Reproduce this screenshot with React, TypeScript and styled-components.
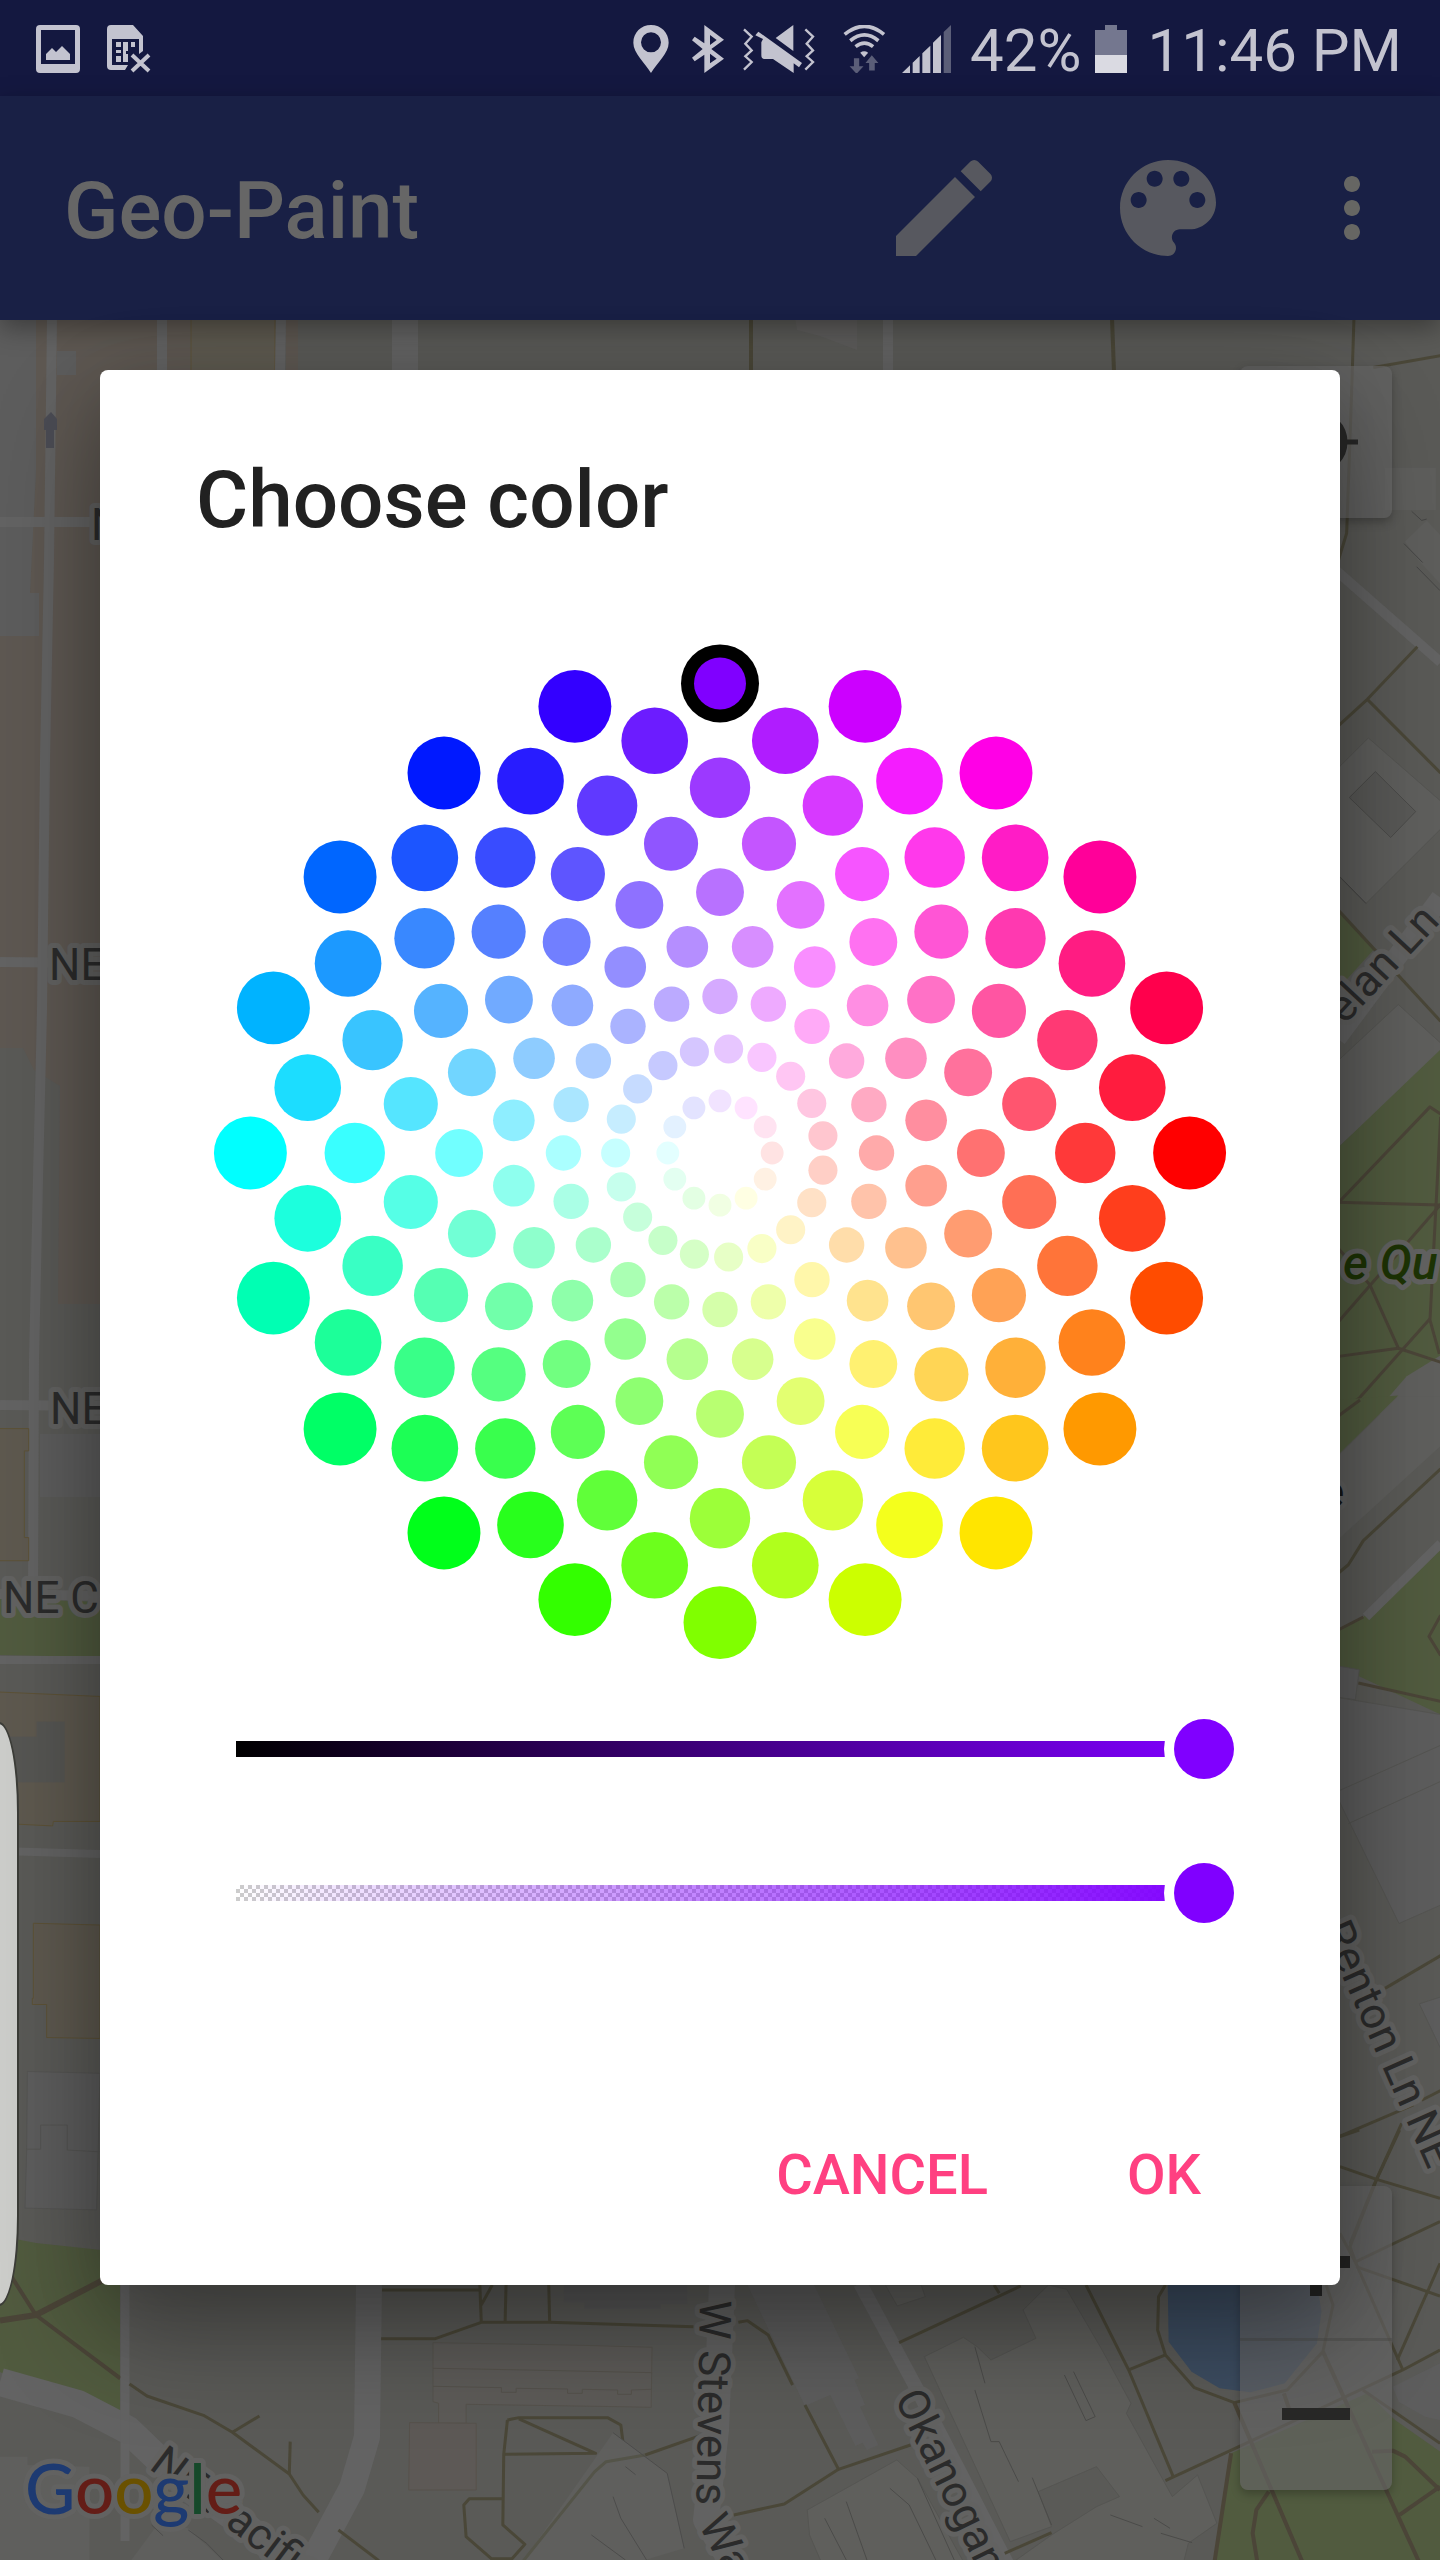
import React, { useState } from "react";
import styled, { createGlobalStyle, css } from "styled-components";
import { MdEdit, MdMoreVert } from "react-icons/md";

const GlobalStyle = createGlobalStyle`
  * { box-sizing: border-box; }
  body { margin: 0; background: #595956; }
`;

/* ---------- page frame ---------- */

const Screen = styled.div`
  display: flex;
  flex-direction: column;
  min-height: 100vh;
  font-family: Roboto, "Liberation Sans", sans-serif;
`;

const StatusBar = styled.header`
  display: flex;
  align-items: center;
  justify-content: space-between;
  height: 96px;
  padding: 2px 38px 0 36px;
  background: #141840;
  color: #c3c3cf;
  font-size: 60px;
  line-height: 72px;
`;

const StatusGroup = styled.div`
  display: flex;
  align-items: center;
`;

const StatusText = styled.span<{ $before: number }>`
  margin-left: ${(p) => p.$before}px;
  padding-top: 4px;
  white-space: nowrap;
`;

const Glyph = styled.svg<{ $w: number; $before?: number }>`
  display: block;
  width: ${(p) => p.$w}px;
  height: 48px;
  margin-left: ${(p) => p.$before ?? 0}px;
  fill: currentColor;
`;

const Toolbar = styled.div`
  position: relative;
  z-index: 1;
  display: flex;
  align-items: center;
  height: 224px;
  padding: 0 40px 0 64px;
  background: #192045;
  box-shadow: 0 8px 24px rgba(0, 0, 0, 0.35);
`;

const AppTitle = styled.h1`
  flex: 1;
  margin: 0;
  padding-top: 6px;
  color: #666666;
  font-size: 80px;
  font-weight: 500;
  line-height: 96px;
`;

const Actions = styled.div`
  display: flex;
  align-items: center;
  gap: 72px;
`;

const ToolGroup = styled.div`
  display: flex;
  gap: 96px;
`;

const IconButton = styled.button<{ $size: number; $tone: string }>`
  display: flex;
  padding: 0;
  border: 0;
  background: none;
  color: ${(p) => p.$tone};
  font-size: ${(p) => p.$size}px;
  cursor: pointer;
`;

/* ---------- map ---------- */

const MapPane = styled.main`
  position: relative;
  flex: 1;
  min-height: 2240px;
  overflow: hidden;
`;

const MapCanvas = styled.svg`
  position: absolute;
  inset: 0;
  width: 100%;
  height: 100%;
`;

const Line = styled.polyline<{ $c?: string; $w?: number }>`
  fill: none;
  stroke: ${(p) => p.$c ?? "#4a4738"};
  stroke-width: ${(p) => p.$w ?? 4}px;
  stroke-linejoin: round;
  vector-effect: non-scaling-stroke;
`;

const Label = styled.text<{ $size?: number; $color?: string; $style?: string; $weight?: number }>`
  fill: ${(p) => p.$color ?? "#2b2b2b"};
  stroke: #626261;
  stroke-width: 10px;
  stroke-linejoin: round;
  paint-order: stroke;
  font-family: Roboto, sans-serif;
  font-size: ${(p) => p.$size ?? 44}px;
  font-style: ${(p) => p.$style ?? "normal"};
  font-weight: ${(p) => p.$weight ?? 400};
`;

const Logo = styled(Label)`
  font-family: Lato, sans-serif;
`;

const controlSurface = css`
  border-radius: 8px;
  background: rgba(102, 102, 101, 0.65);
  box-shadow: 0 4px 10px rgba(0, 0, 0, 0.25);
`;

const LocateButton = styled.button`
  ${controlSurface}
  position: absolute;
  top: 46px;
  right: 48px;
  display: flex;
  align-items: center;
  justify-content: center;
  width: 152px;
  height: 152px;
  padding: 0;
  border: 0;
`;

const ZoomControl = styled.div`
  ${controlSurface}
  position: absolute;
  right: 48px;
  bottom: 70px;
  display: flex;
  flex-direction: column;
  width: 152px;
`;

const ZoomButton = styled.button`
  display: flex;
  align-items: center;
  justify-content: center;
  height: 152px;
  padding: 0;
  border: 0;
  background: none;
  & + & {
    box-shadow: inset 0 3px 0 rgba(70, 70, 68, 0.4);
  }
`;

const EdgeHandle = styled.div`
  position: absolute;
  left: -6px;
  top: 1402px;
  width: 25px;
  height: 584px;
  border: 2px solid #3c3d38;
  border-radius: 0 20px 20px 0 / 0 90px 90px 0;
  background: #cdcecb;
`;

/* ---------- dialog ---------- */

const Overlay = styled.div`
  position: absolute;
  inset: 96px 0 0;
  z-index: 2;
  display: flex;
  align-items: center;
  justify-content: center;
  padding: 0 100px 2px;
`;

const Dialog = styled.section`
  display: flex;
  flex-direction: column;
  width: 100%;
  max-width: 1240px;
  padding: 80px 96px 38px;
  border-radius: 8px;
  background: #ffffff;
  box-shadow: 0 50px 110px rgba(0, 0, 0, 0.32), 0 10px 70px rgba(0, 0, 0, 0.16);
`;

const DialogTitle = styled.h2`
  margin: 0 0 79px;
  color: #212121;
  font-size: 80px;
  font-weight: 500;
  line-height: 100px;
`;

const Wheel = styled.svg`
  display: block;
  width: 100%;
`;

const Swatch = styled.circle`
  cursor: pointer;
`;

const SliderRow = styled.label`
  display: flex;
  align-items: center;
  height: 144px;
  padding: 0 10px;
`;

const thumb = css<{ $color: string }>`
  width: 60px;
  height: 60px;
  border: 0;
  border-radius: 50%;
  background: ${(p) => p.$color};
  box-shadow: 0 0 0 10px #ffffff;
`;

/* White frame over the track leaves a 16px bar that stops at the centre of the thumb's end positions. */
const cover = "linear-gradient(#ffffff, #ffffff)";
const frame = [
  `${cover} top / 100% 22px no-repeat`,
  `${cover} bottom / 100% 22px no-repeat`,
  `${cover} left / 30px 100% no-repeat`,
  `${cover} right / 30px 100% no-repeat`,
].join(", ");

const Slider = styled.input<{ $track: string; $color: string }>`
  flex: 1;
  min-width: 0;
  height: 60px;
  margin: 0;
  appearance: none;
  background: none;
  cursor: pointer;
  &::-webkit-slider-runnable-track {
    height: 60px;
    background: ${frame}, ${(p) => p.$track};
  }
  &::-webkit-slider-thumb {
    appearance: none;
    ${thumb}
  }
  &::-moz-range-track {
    height: 60px;
    background: ${frame}, ${(p) => p.$track};
  }
  &::-moz-range-thumb {
    ${thumb}
  }
`;

const HiddenText = styled.span`
  position: absolute;
  width: 1px;
  height: 1px;
  overflow: hidden;
  clip-path: inset(50%);
`;

const Footer = styled.footer`
  display: flex;
  justify-content: flex-end;
  gap: 16px;
  margin: 138px -48px 0 0;
`;

const TextButton = styled.button`
  min-width: 256px;
  height: 144px;
  padding: 0 32px;
  border: 0;
  background: none;
  color: #ff4081;
  font-family: inherit;
  font-size: 56px;
  font-weight: 500;
  text-transform: uppercase;
  cursor: pointer;
`;

/* ---------- colour wheel ---------- */

type Dot = { x: number; y: number; r: number; fill: string };

const hsv = (h: number, s: number, v: number) => {
  const f = (n: number) => {
    const k = (n + h / 60) % 6;
    return Math.round(255 * (v - v * s * Math.max(0, Math.min(k, 4 - k, 1))));
  };
  return `rgb(${f(5)}, ${f(3)}, ${f(1)})`;
};

const RINGS = 9;
const SPREAD = 469.6;

const dots: Dot[] = [];
for (let ring = 1; ring <= RINGS; ring++) {
  const count = ring === 1 ? 12 : ring === 2 ? 19 : 20;
  const shift = ring % 2 === 0 ? 180 / count : 0;
  const radius = (SPREAD * ring) / RINGS;
  for (let i = 0; i < count; i++) {
    const angle = (shift + (i * 360) / count) % 360;
    const rad = (angle * Math.PI) / 180;
    dots.push({
      x: radius * Math.cos(rad),
      y: radius * Math.sin(rad),
      r: 8.3 + 3.13 * ring,
      fill: hsv(angle, ring / RINGS, 1),
    });
  }
}
const START = dots.length - 5;

/* ---------- map data ---------- */

const OLIVE = "#4a4738";
const BROWN = "#4b4538";
const ROAD = "#636363";
const GREEN = "#515b3f";
const BLOCK = "#5f5f5d";

const Lines = ({ c, w, list }: { c?: string; w?: number; list: string[] }) => (
  <>
    {list.map((points) => (
      <Line key={points} points={points} $c={c} $w={w} />
    ))}
  </>
);

const Areas = ({ fill, list, edge }: { fill: string; list: string[]; edge?: string }) => (
  <g fill={fill} stroke={edge ?? "none"} strokeWidth={edge ? 1 : 0}>
    {list.map((points) => (
      <polygon key={points} points={points} vectorEffect="non-scaling-stroke" />
    ))}
  </g>
);

const CampusMap = () => (
  <MapCanvas viewBox="0 320 1440 2240" preserveAspectRatio="xMinYMin slice" aria-hidden="true">
    <rect y="320" width="1440" height="2240" fill="#5a5a57" />

    {/* west side, upper blocks */}
    <Areas
      fill="#5e5852"
      list={[
        "36,320 190,320 190,380 100,380 100,1304 58,1304 60,1086 34,1070 23,1048 0,1048 0,636 39,636 39,593 30,593 36,470",
        "286,320 298,320 298,370 286,370",
      ]}
    />
    <Areas fill="#5e5a50" edge="#5e5238" list={["191,318 275,318 275,372 191,372"]} />
    <Areas fill="#5d5d5d" list={["57,351 76,351 76,375 57,375", "40,1434 100,1434 100,1497 40,1497", "0,320 36,320 36,470 30,593 39,593 39,636 0,636"]} />
    <Areas fill="#5e5d5c" list={["795,318 857,318 857,350 820,336 797,330"]} />
    <Areas fill={GREEN} list={["0,1598 100,1602 100,1657 0,1655"]} />
    <Lines
      c={ROAD}
      w={10}
      list={["0,522 100,522", "0,962 100,963", "0,1405 100,1406", "0,1594 100,1596"]}
    />
    <Lines c={ROAD} w={8} list={["0,1660 100,1660", "0,1851 100,1854"]} />
    <Line points="52,318 49,560 45,760 42,1010 38,1180 34,1360 33,1596" $c={ROAD} $w={10} />
    <polygon points="44,430 44,419 51,412 57,419 57,430 54,430 54,448 46,448 46,430" fill="#4b4c54" />
    <Line points="405,318 405,372" $c={ROAD} $w={26} />
    <Lines c={ROAD} w={10} list={["162,318 162,372", "281,318 280,372", "888,318 888,372"]} />
    <Lines list={["751,318 751,372", "1112,318 1114,372"]} />

    {/* west side, lower blocks */}
    <g transform="translate(0 1000) scale(0.3333 0.8929)">
      <Areas
        fill="#5e594f"
        edge="#5d5237"
        list={[
          "-4,480 86,480 86,505 73,505 73,602 86,602 86,628 -4,628",
          "-4,775 300,780 300,920 160,920 158,925 -4,922",
          "100,1034 300,1036 300,1163 140,1162 140,1125 97,1125 97,1118 100,1118",
        ]}
      />
      <Areas fill="#565653" list={["25,825 110,825 110,808 194,808 194,876 25,876"]} />
      <Areas fill="#5d5d5d" edge="#555553" list={["82,1200 300,1202 290,1355 75,1353 80,1288"]} />
      <Lines c="#555553" w={1} list={["80,1287 122,1287 122,1260 202,1260 202,1288 300,1290"]} />
    </g>

    {/* south-west corner */}
    <polygon points="0,2236 36,2243 120,2252 120,2430 0,2372" fill={GREEN} />
    <g transform="translate(0 2270) scale(0.4592 0.3333)">
      <Lines c={BROWN} w={4} list={["25,20 78,135 262,325"]} />
      <Lines c={BROWN} w={6} list={["0,152 78,135 222,32"]} />
      <Areas
        fill={BLOCK}
        list={["-2,560 60,560 60,585 195,590 195,872 -2,872", "285,872 345,760 410,775 485,872"]}
      />
      <Areas fill="#5d5b58" edge="#56534d" list={["943,218 1270,226 1420,232 1418,412 1345,410 1015,403 1015,460 955,460 955,400 943,395"]} />
      <Areas fill="#5d5956" edge="#57524c" list={["892,458 1037,460 1037,660 890,660"]} />
      <Areas fill="#575757" list={["1228,45 1497,45 1497,103 1438,103 1438,117 1273,117 1273,97 1228,97"]} />
      <Lines
        c="#55524c"
        w={1}
        list={["943,295 1030,297 1145,300 1420,308", "943,349 1092,353 1092,367 1124,367 1124,355 1236,357 1236,370 1268,370 1268,358 1345,360 1345,373 1375,373 1375,360 1418,358"]}
      />
    </g>
    <Line points="0,2382 78,2404 128,2430 175,2475 238,2520 300,2572" $c={ROAD} $w={28} />
    <Line points="125,2284 125,2541" $c={ROAD} $w={9} />
    <Line points="369,2284 367,2437 352,2488 306,2574" $c={ROAD} $w={26} />
    <g transform="translate(0 2270) scale(0.4592 0.3333)">
      <Lines
        c={OLIVE}
        w={3}
        list={[
          "832,60 1045,60",
          "1045,45 1048,155",
          "1072,45 1048,105",
          "1102,45 1100,155",
          "1195,45 1197,157",
          "830,206 948,206 1048,157 1197,157 1510,170",
          "282,342 320,378 443,436 506,487 630,612 660,675 694,727",
          "506,487 565,438",
          "632,515 630,612",
          "737,780 825,872",
          "1105,450 1130,443 1323,443 1352,465 1360,555",
          "1130,447 1297,550 1097,553",
          "1105,450 1097,553 1095,765 1143,823 1115,866 1070,866 1015,800 1010,705 1022,686 1095,686",
          "1545,487 1405,555",
        ]}
      />
      <Areas fill={BLOCK} list={["1140,872 1335,488 1453,610 1490,835 1400,872"]} />
      <Lines c="#545449" w={3} list={["1405,555 1320,575 1295,605 1140,872"]} />
      <Lines c="#4c4c4b" w={1} list={["1335,488 1453,610", "1335,680 1352,745 1408,870", "1453,610 1490,835", "1288,795 1362,870", "1362,590 1384,614", "410,780 450,820 487,872", "330,765 355,797"]} />
    </g>

    {/* south-east */}
    <Line points="722,2284 716,2430 706,2520 740,2575" $c="#626262" $w={26} />
    <g transform="translate(720 2130) scale(0.4592 0.3333)">
      <Areas
        fill="#5d5d5d"
        list={[
          "60,465 205,465 303,745 293,750 316,825 305,830 345,945 320,960 310,938 295,948 240,795 185,828",
          "1465,770 1568,700 1568,870 1535,860 1478,815",
        ]}
      />
      <Areas
        fill="#5f5f5c"
        edge="#555552"
        list={[
          "445,680 530,622 560,650 590,690 688,625 660,540 715,465 755,478 830,655 895,820 885,850 985,1100 1040,1035 1082,1180 1020,1240 1010,1295 640,1295 722,1215 820,1130 870,1100 820,1010 693,1085 722,1190 632,1235",
          "190,1140 385,990 430,1045 530,1295 220,1295 195,1215",
          "360,465 438,465 447,500 386,528",
        ]}
      />
      <Areas fill={GREEN} list={["1113,970 1410,790 1470,870 1568,965 1568,1295 1077,1295"]} />
      <Areas fill="#3c4c60" list={["975,460 977,635 1027,725 1088,775 1155,787 1230,760 1300,640 1310,545 1300,460"]} />
      <Lines
        c="#4b4b49"
        w={1}
        list={["770,725 817,860", "750,735 797,872 817,860", "555,650 577,760", "555,780 590,935 608,935 650,1055", "680,1043 722,1185", "228,1165 275,1290", "370,1075 412,1125 470,1290", "430,1045 510,1290", "275,1115 320,1290", "850,1155 920,1190", "945,1165 980,1195", "960,1210 1028,1238"]}
      />
      <Lines c={ROAD} w={14} list={["305,460 430,780 625,1300"]} />
      <Lines
        c={OLIVE}
        w={3}
        list={[
          "390,638 655,468",
          "597,465 608,490",
          "40,577 60,572 105,615 158,765",
          "185,825 258,1018 415,945",
          "258,1018 140,1122 30,1155",
          "797,465 890,720 987,1040",
          "890,720 970,675",
          "970,465 955,500 953,600 970,675 1033,773 1120,818 1235,780 1313,665 1335,525 1320,465",
          "620,1270 722,1208",
          "970,1052 1130,950 1487,720 1568,660",
          "1350,20 1392,0",
          "1480,0 1430,148 1372,350 1385,400",
          "1350,110 1430,148 1568,205",
          "1568,275 1465,342 1385,395",
          "1350,310 1385,400 1487,720",
          "1385,410 1568,498",
          "1568,400 1475,690",
          "1400,780 1568,940",
        ]}
      />
      <Lines
        c={BROWN}
        w={4}
        list={[
          "1120,818 1268,1295",
          "1113,970 1077,1295",
          "1195,1085 1168,1140 1160,1210 1170,1295",
          "1313,665 1522,1295",
          "1420,965 1465,962 1492,980 1568,1080",
          "1480,1155 1568,1070",
          "1228,790 1245,860",
        ]}
      />
    </g>

    {/* north-east */}
    <g transform="translate(1330 310) scale(0.3333 0.7015)">
      <Areas fill="#5e5e5c" list={["165,225 318,225 318,285 165,285", "225,330 290,300 330,320 330,390 262,355"]} />
      <Areas fill={BLOCK} edge="#555552" list={["20,655 115,610 332,700 332,740 108,846 20,805", "20,1072 205,990 332,1045 332,1060 20,1196"]} />
      <Areas fill="#595957" edge="#4b4b49" list={["58,695 136,658 257,715 182,752"]} />
      <Areas fill={GREEN} list={["20,853 135,910 20,970", "20,1196 332,1054 332,1575 20,1575"]} />
      <Areas fill={BLOCK} list={["130,1575 230,1520 332,1490 332,1575"]} />
      <Line points="20,372 332,502" $c={ROAD} $w={10} />
      <Line points="20,1038 332,838" $c={ROAD} $w={20} />
      <Lines w={1} c="#454544" list={["245,287 275,300 290,298", "222,333 278,360", "260,366 330,400", "30,808 108,846"]} />
      <Lines
        w={3}
        list={["72,10 64,130 50,318 20,365", "130,82 332,65", "20,595 112,555 262,480", "112,555 332,660", "20,853 332,1014"]}
      />
      <Lines
        c={BROWN}
        w={3}
        list={[
          "20,1275 300,1136 332,1146",
          "20,1272 332,1276",
          "20,1445 332,1275",
          "20,1335 120,1390 205,1480 332,1500",
          "20,1492 205,1480",
          "332,1150 300,1440 328,1488",
          "20,1575 90,1550 300,1438",
        ]}
      />
    </g>

    {/* east side */}
    <g transform="translate(1330 1400) scale(0.3333 0.574)">
      <Areas fill={GREEN} list={["20,0 205,-8 20,98", "20,403 100,378 332,258 332,548 20,463"]} />
      <Areas fill={BLOCK} list={["20,100 205,-6 332,-6 332,80 125,190 20,245"]} />
      <Areas fill="#5d5d5d" edge="#555552" list={["20,463 88,470 76,522 20,518", "20,518 332,548 332,880 207,912 20,690", "268,1052 332,1040 332,1130"]} />
      <Lines c="#555552" w={1} list={["30,680 330,602", "55,738 330,665"]} />
      <Line points="108,378 332,250" $c={ROAD} $w={9} />
      <Lines w={3} list={["20,304 55,287 100,245 332,120", "165,1025 332,968", "20,1285 250,1228", "275,1220 332,1203", "215,1260 130,1370 60,1470"]} />
      <Lines c={BROWN} w={3} list={["20,402 100,378", "332,375 297,412 332,445", "85,493 332,525", "20,30 90,0"]} />
    </g>

    {/* street names */}
    <Label x="91" y="540">N</Label>
    <Label x="49" y="980">NE</Label>
    <Label x="50" y="1424">NE</Label>
    <Label x="3" y="1613">NE C</Label>
    <Label transform="translate(1441 922) rotate(-47)" textAnchor="end">elan Ln</Label>
    <Label x="1343" y="1279" $size={48} $style="italic" $weight={500} $color="#1d3305">e Qu</Label>
    <Label x="1344" y="1507" textAnchor="end" $weight={500} $color="#171717">e</Label>
    <Label transform="translate(1321 1929) rotate(66)">Renton Ln NE</Label>
    <Label transform="translate(700 2300) rotate(91)">W Stevens</Label>
    <Label transform="translate(698 2524) rotate(62)">Way</Label>
    <Label transform="translate(894 2398) rotate(64)">Okanogan</Label>
    <Label transform="translate(148 2468) rotate(37)">NE Pacific</Label>
    <Logo x="25" y="2514" $size={69} $weight={500}>
      <tspan fill="#1d3a72">G</tspan>
      <tspan fill="#641d17">o</tspan>
      <tspan fill="#6a5100">o</tspan>
      <tspan fill="#1d3a72">g</tspan>
      <tspan fill="#15492a">l</tspan>
      <tspan fill="#641d17">e</tspan>
    </Logo>
  </MapCanvas>
);

/* ---------- app ---------- */

export default function App() {
  const [picked, setPicked] = useState(START);
  const [light, setLight] = useState(100);
  const [alpha, setAlpha] = useState(100);

  const base = dots[picked].fill;
  const shade = `color-mix(in srgb, ${base} ${light}%, #000000)`;
  const checker = "conic-gradient(#cccccc 25%, #ffffff 0 50%, #cccccc 0 75%, #ffffff 0)";
  const lightTrack = `linear-gradient(90deg, #000000 30px, ${base} calc(100% - 30px))`;
  const alphaTrack = `linear-gradient(90deg, transparent 30px, ${shade} calc(100% - 30px)), ${checker} 30px 22px / 8px 8px`;

  return (
    <Screen>
      <GlobalStyle />
      <StatusBar>
        <StatusGroup>
          <Glyph $w={44} viewBox="0 0 44 48">
            <path
              fillRule="evenodd"
              d="M4 0h36a4 4 0 0 1 4 4v40a4 4 0 0 1-4 4H4a4 4 0 0 1-4-4V4a4 4 0 0 1 4-4zM5 5v34h34V5zM10 35v-6l6-6 4 4 6-6 8 8v6z"
            />
          </Glyph>
          <Glyph $w={44} $before={27} viewBox="0 0 44 48">
            <path d="M4 0h22l10 11v15l-4 3V14H5v26h16l-3 5H4a4 4 0 0 1-4-4V4a4 4 0 0 1 4-4z" />
            <path d="M9 17h5v5H9zM16 17h5v9h-2v3h2v8h-5zM24 17h4v5h-4zM9 25h5v3H9zM9 31h5v6H9z" />
            <path d="M25 30l17 16M42 30L25 46" stroke="currentColor" strokeWidth="4" />
          </Glyph>
        </StatusGroup>
        <StatusGroup>
          <Glyph $w={36} viewBox="21 44 108 144">
            <path
              fillRule="evenodd"
              d="M75 44c30 0 53 23 53 53 0 32-35 60-53 91-18-31-53-59-53-91 0-30 23-53 53-53zm0 22a30 30 0 1 0 0 60 30 30 0 0 0 0-60z"
            />
          </Glyph>
          <Glyph $w={32} $before={23} viewBox="197 44 96 144">
            <path
              fillRule="evenodd"
              d="M234 44l59 44-38 28 38 29-59 43v-55l-29 20-8-11 32-26-32-26 8-11 29 20zM251 74v30l20-15zM251 130v29l20-14z"
            />
          </Glyph>
          <Glyph $w={72} $before={19} viewBox="352 44 216 144">
            <path d="M503 44v78l-53-39zM398 64l131 94-9 13-16-12v29l-62-42h-24c-8 0-11-3-11-12V96l5-10-23-11z" />
            <path
              d="M355 57l23 22-19 21 19 20-19 18 19 17-23 23M539 57l23 22-19 21 19 20-19 18 19 17-23 23"
              fill="none"
              stroke="currentColor"
              strokeWidth="7"
            />
          </Glyph>
          <Glyph $w={43} $before={28} viewBox="651 44 130 144">
            <g fill="none" stroke="currentColor" strokeWidth="11">
              <path d="M656 72q60-49 119 0" />
              <path d="M673 91q43-35 85 0" />
              <path d="M689 109q27-21 53 0" />
            </g>
            <path d="M703 127q12-9 24 0l-12 14z" />
            <path fill="#5b5e78" d="M684 144h16v24h13l-21 23-21-23h13zM738 135l20 23h-11v23h-17v-23h-11z" />
          </Glyph>
          <Glyph $w={49} $before={16} viewBox="828 44 147 144">
            <path d="M828 188l24-23v23zM860 157l21-20v51h-21zM889 129l24-23v82h-24zM921 97l24-23v114h-24z" />
            <path fill="#5b5e78" d="M953 65l22-21v144h-22z" />
          </Glyph>
          <StatusText $before={19}>42%</StatusText>
          <Glyph $w={32} $before={14} viewBox="0 0 32 48">
            <path fill="#74778f" d="M10 0h12v5h10v25H0V5h10z" />
            <path fill="#dadae2" d="M0 30h32v18H0z" />
          </Glyph>
          <StatusText $before={20}>11:46 PM</StatusText>
        </StatusGroup>
      </StatusBar>

      <Toolbar>
        <AppTitle>Geo-Paint</AppTitle>
        <Actions>
          <ToolGroup>
            <IconButton $size={128} $tone="#57585f" aria-label="Draw">
              <MdEdit />
            </IconButton>
            <IconButton $size={128} $tone="#57585f" aria-label="Choose color">
              <svg width="1em" height="1em" viewBox="0 0 24 24" fill="currentColor">
                <path d="M12 3c-4.97 0-9 4.03-9 9s4.03 9 9 9c.83 0 1.5-.67 1.5-1.5 0-.39-.15-.74-.39-1.01-.23-.26-.38-.61-.38-.99 0-.83.67-1.5 1.5-1.5H16c2.76 0 5-2.24 5-5 0-4.42-4.03-8-9-8zm-5.5 9c-.83 0-1.5-.67-1.5-1.5S5.67 9 6.5 9 8 9.67 8 10.5 7.33 12 6.5 12zm3-4C8.67 8 8 7.33 8 6.5S8.67 5 9.5 5s1.5.67 1.5 1.5S10.33 8 9.5 8zm5 0c-.83 0-1.5-.67-1.5-1.5S13.67 5 14.5 5s1.5.67 1.5 1.5S15.33 8 14.5 8zm3 4c-.83 0-1.5-.67-1.5-1.5S16.67 9 17.5 9s1.5.67 1.5 1.5-.67 1.5-1.5 1.5z" />
              </svg>
            </IconButton>
          </ToolGroup>
          <IconButton $size={96} $tone="#666663" aria-label="More options">
            <MdMoreVert />
          </IconButton>
        </Actions>
      </Toolbar>

      <MapPane>
        <CampusMap />
        <LocateButton aria-label="My location">
          <svg width="84" height="84" viewBox="0 0 84 84" fill="none" stroke="#282827">
            <circle cx="42" cy="42" r="27" strokeWidth="9" />
            <path d="M73 42h11M0 42h11M42 0v11M42 73v11" strokeWidth="5" />
          </svg>
        </LocateButton>
        <ZoomControl>
          <ZoomButton aria-label="Zoom in">
            <svg width="68" height="68" viewBox="0 0 68 68" fill="#232322">
              <path d="M0 28h68v12H0zM28 0h12v68H28z" />
            </svg>
          </ZoomButton>
          <ZoomButton aria-label="Zoom out">
            <svg width="68" height="12" viewBox="0 0 68 12" fill="#282827">
              <path d="M0 0h68v12H0z" />
            </svg>
          </ZoomButton>
        </ZoomControl>
        <EdgeHandle />
      </MapPane>

      <Overlay>
        <Dialog role="dialog" aria-modal="true" aria-labelledby="dialog-title">
          <DialogTitle id="dialog-title">Choose color</DialogTitle>
          <Wheel viewBox="-524 -524 1048 1048" role="group" aria-label="Color wheel">
            {dots.map((d, i) =>
              i === picked ? (
                <g key={i}>
                  <circle cx={d.x} cy={d.y} r={39} fill="#000000" />
                  <circle cx={d.x} cy={d.y} r={26} fill={d.fill} />
                </g>
              ) : (
                <Swatch key={i} cx={d.x} cy={d.y} r={d.r} fill={d.fill} onClick={() => setPicked(i)} />
              )
            )}
          </Wheel>
          <SliderRow>
            <HiddenText>Lightness</HiddenText>
            <Slider
              type="range"
              min={0}
              max={100}
              value={light}
              onChange={(e) => setLight(Number(e.target.value))}
              $track={lightTrack}
              $color={shade}
            />
          </SliderRow>
          <SliderRow>
            <HiddenText>Opacity</HiddenText>
            <Slider
              type="range"
              min={0}
              max={100}
              value={alpha}
              onChange={(e) => setAlpha(Number(e.target.value))}
              $track={alphaTrack}
              $color={shade}
            />
          </SliderRow>
          <Footer>
            <TextButton type="button">Cancel</TextButton>
            <TextButton type="button">OK</TextButton>
          </Footer>
        </Dialog>
      </Overlay>
    </Screen>
  );
}
